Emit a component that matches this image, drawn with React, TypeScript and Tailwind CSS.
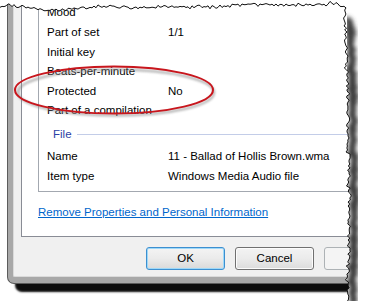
import React from 'react';

type Pt = [number, number];

const topCtrl: Pt[] = [
  [0, 6], [7, 5], [25, 7], [45, 10], [75, 9], [100, 6], [140, 8], [180, 6],
  [220, 7], [255, 4], [285, 5], [320, 5], [338, 4], [346, 8],
];
const rightCtrl: Pt[] = [
  [8, 346], [20, 345], [60, 347], [120, 348], [180, 349], [240, 349], [301, 348],
];

function lerp(ctrl: Pt[], t: number) {
  for (let i = 0; i < ctrl.length - 1; i++) {
    const [a, av] = ctrl[i];
    const [b, bv] = ctrl[i + 1];
    if (t >= a && t <= b) return av + ((t - a) / (b - a)) * (bv - av);
  }
  return ctrl[ctrl.length - 1][1];
}

function makeRng(seed: number) {
  let s = seed;
  return () => {
    s = (s * 16807) % 2147483647;
    return s / 2147483647;
  };
}

const rnd = makeRng(91);
const topPts: Pt[] = [];
for (let x = 0; x <= 346; x += 2) {
  const spike = rnd() > 0.88 ? (rnd() - 0.5) * 5 : 0;
  topPts.push([x, lerp(topCtrl, x) + (rnd() - 0.5) * 2.8 + spike]);
}
const rightPts: Pt[] = [];
for (let y = 10; y <= 303; y += 2) {
  const spike = rnd() > 0.85 ? (rnd() - 0.5) * 5.5 : 0;
  rightPts.push([lerp(rightCtrl, y) + (rnd() - 0.5) * 3.2 + spike, y]);
}
const edge = [...topPts, ...rightPts];
const edgeStr = edge.map(([x, y]) => `${x.toFixed(1)},${y.toFixed(1)}`).join(' ');
const maskPath = `M0,0 L0,${topPts[0][1].toFixed(1)} L${edgeStr.replace(/ /g, ' L')} L366,303 L366,0 Z`;
const shadowStr = rightPts
  .filter(([, y]) => y > 14)
  .map(([x, y]) => `${(x + 5).toFixed(1)},${(y + 2).toFixed(1)}`)
  .join(' ');

const rows: [string, string][] = [
  ['Mood', ''],
  ['Part of set', '1/1'],
  ['Initial key', ''],
  ['Beats-per-minute', ''],
  ['Protected', 'No'],
  ['Part of a compilation', ''],
];

const fileRows: [string, string][] = [
  ['Name', '11 - Ballad of Hollis Brown.wma'],
  ['Item type', 'Windows Media Audio file'],
];

function PropRow({ label, value }: { label: string; value: string }) {
  return (
    <div className="flex h-[19.6px] items-center whitespace-nowrap">
      <span className="w-[121px] shrink-0">{label}</span>
      <span>{value}</span>
    </div>
  );
}

function DialogButton({ label, kind }: { label: string; kind: 'default' | 'normal' | 'disabled' }) {
  const look =
    kind === 'default'
      ? 'border-[#3c8fd0] bg-gradient-to-b from-[#f4f4f4] via-[#ebebeb] to-[#d9d9d9] shadow-[inset_0_0_0_1px_#9ed8f8]'
      : kind === 'normal'
        ? 'border-[#707070] bg-gradient-to-b from-[#f3f3f3] via-[#ebebeb] to-[#dcdcdc] shadow-[inset_0_0_0_1px_#fcfcfc]'
        : 'border-[#adb2b5] bg-[#f4f4f4]';
  return (
    <div className={`flex h-[23px] w-[79px] shrink-0 items-center justify-center rounded-[3px] border text-black ${look}`}>
      {label}
    </div>
  );
}

export default function App() {
  return (
    <div className="relative h-[301px] w-[366px] overflow-hidden bg-white font-['Liberation_Sans',Arial,sans-serif] text-[11.5px] text-black">
      <div className="ml-[7px] h-[284px] w-[420px] rounded-bl-[7px] border-b border-l border-[#5c5c5c] bg-[#a8a8a8] pb-[6px] pl-[5px] shadow-[8px_8px_2px_rgba(0,0,0,0.95)]">
        <div className="h-full rounded-bl-[2px] border-b border-l border-[#dadada] bg-[#f0f0f0] pl-[7px]">
          <div className="h-[237px] border-b border-l border-[#898c95] bg-white pl-[16px]">
            <div className="h-[192px] border-b border-l border-[#a3a8b0] pl-[8px] pt-[3.2px]">
              {rows.map(([l, v]) => (
                <PropRow key={l} label={l} value={v} />
              ))}
              <div className="flex h-[26.4px] items-center pl-[6px] pt-[2px]">
                <span className="text-[#2b3fa5]">File</span>
                <div className="ml-[5px] h-px flex-1 bg-[#c3cde8]" />
              </div>
              {fileRows.map(([l, v]) => (
                <PropRow key={l} label={l} value={v} />
              ))}
            </div>
            <div className="mt-[12.5px] h-[15px] leading-[15px] text-[#0066cc] underline">
              Remove Properties and Personal Information
            </div>
          </div>
          <div className="ml-[125px] mt-[10px] flex gap-[10px]">
            <DialogButton label="OK" kind="default" />
            <DialogButton label="Cancel" kind="normal" />
            <DialogButton label="" kind="disabled" />
          </div>
        </div>
      </div>

      <svg className="pointer-events-none absolute left-0 top-0" width="366" height="301" viewBox="0 0 366 301">
        <defs>
          <filter id="blur2" x="-20%" y="-20%" width="140%" height="140%">
            <feGaussianBlur stdDeviation="2.2" />
          </filter>
          <filter id="blur1" x="-10%" y="-30%" width="120%" height="160%">
            <feGaussianBlur stdDeviation="1.3" />
          </filter>
          <clipPath id="outside">
            <path d={maskPath} />
          </clipPath>
        </defs>
        <path d={maskPath} fill="#ffffff" />
        <polyline points={shadowStr} fill="none" stroke="#3e3e3e" strokeWidth="7" filter="url(#blur2)" clipPath="url(#outside)" />
        <polyline points={edgeStr} fill="none" stroke="#111111" strokeWidth="1" strokeLinejoin="round" />
        <ellipse cx="116" cy="92.5" rx="98" ry="23" fill="none" stroke="#8a8a8a" strokeWidth="2.5" opacity="0.6" filter="url(#blur1)" />
        <ellipse cx="114" cy="90" rx="99" ry="23.5" fill="none" stroke="#c8161d" strokeWidth="2" />
      </svg>
    </div>
  );
}
